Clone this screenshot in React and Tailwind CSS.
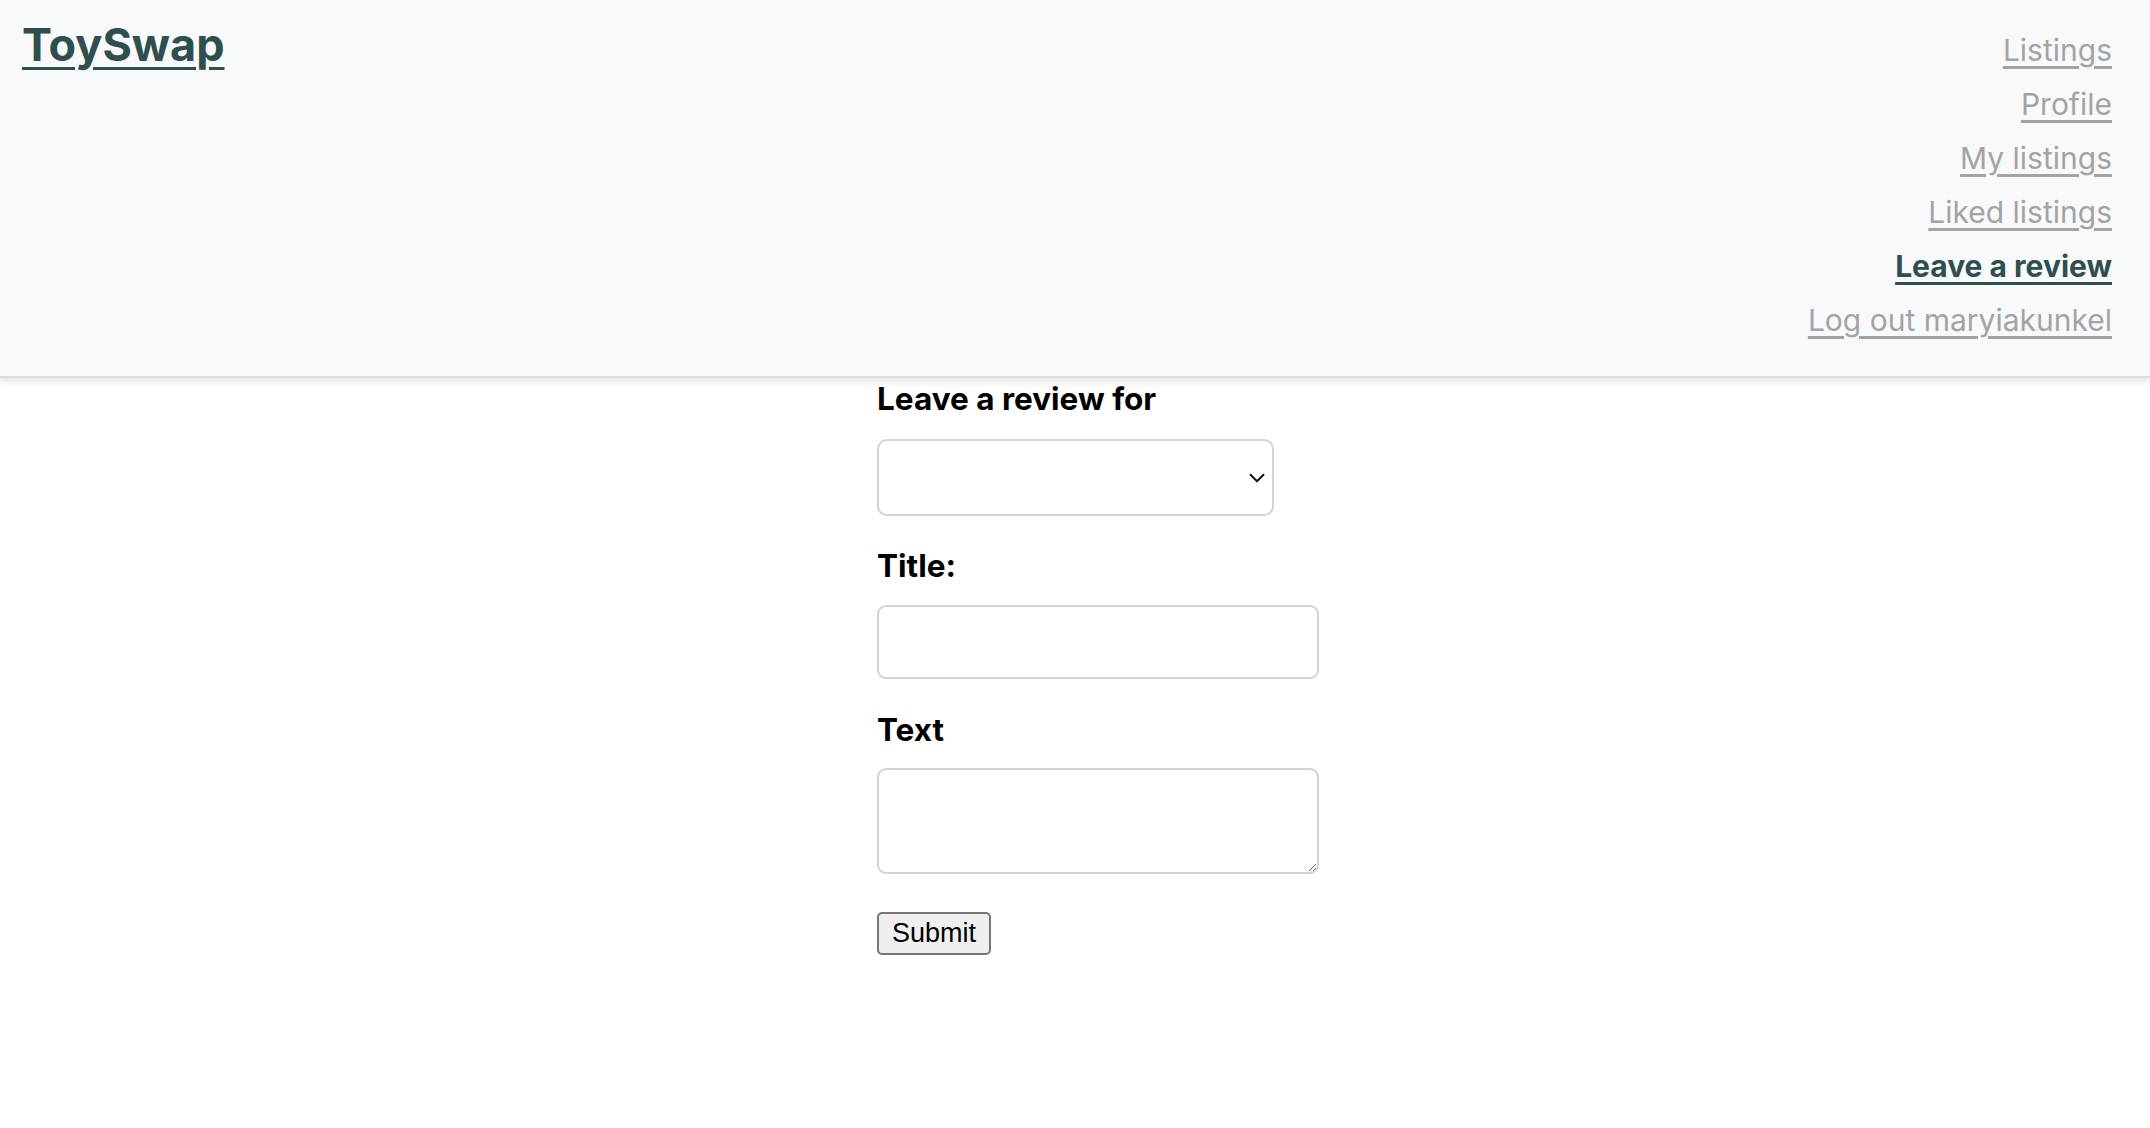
const navLinks = [
  { label: "Listings" },
  { label: "Profile" },
  { label: "My listings" },
  { label: "Liked listings" },
  { label: "Leave a review", active: true },
  { label: "Log out maryiakunkel" },
];

function Header() {
  return (
    <header className="flex items-baseline justify-between border-b-2 border-[#dcdcdc] bg-[#f8f9fa] pb-[29px] pl-[22px] pr-[38px] pt-[18px] shadow-[0_3px_8px_rgba(0,0,0,0.12)]">
      <a href="#" className="text-[45px] font-bold leading-[54px] text-[#2f4f4f] underline decoration-[3px] underline-offset-[6px]">
        ToySwap
      </a>
      <nav className="flex flex-col items-end">
        {navLinks.map((l) => (
          <a
            key={l.label}
            href="#"
            className={
              l.active
                ? "text-[30px] font-bold leading-[54px] text-[#2f4f4f] underline decoration-[3px] underline-offset-[5px]"
                : "text-[30px] leading-[54px] text-[#a3a3a3] underline decoration-[3px] underline-offset-[5px]"
            }
          >
            {l.label}
          </a>
        ))}
      </nav>
    </header>
  );
}

function ReviewForm() {
  return (
    <form className="mx-auto w-[396px] pt-[3px]" onSubmit={(e) => e.preventDefault()}>
      <label className="block text-[31.5px] font-bold leading-[36px] text-black">Leave a review for</label>
      <div className="relative mt-[22px] h-[77px] w-[397px] rounded-[10px] border-2 border-[#cfd3d9] bg-white">
        <svg className="absolute right-[7px] top-1/2 h-[10px] w-[16px] -translate-y-1/2" viewBox="0 0 16 10" fill="none">
          <path d="M1.5 1.8 8 8.2 14.5 1.8" stroke="#111" strokeWidth="2" strokeLinecap="round" strokeLinejoin="round" />
        </svg>
      </div>

      <label className="mt-[32px] block text-[31.5px] font-bold leading-[36px] text-black">Title:</label>
      <input type="text" className="mt-[21px] block h-[74px] w-[442px] rounded-[9px] border-2 border-[#cfd3d9] bg-white px-3 text-[26px] outline-none" />

      <label className="mt-[33px] block text-[31.5px] font-bold leading-[36px] text-black">Text</label>
      <textarea className="mt-[20px] block h-[106px] w-[442px] rounded-[9px] border-2 border-[#cfd3d9] bg-white px-3 text-[26px] outline-none" />

      <button
        type="submit"
        className="mt-[38px] block h-[43px] w-[114px] rounded-[5px] border-2 border-[#767676] bg-[#efefef] text-[27px] leading-none text-black"
        style={{ fontFamily: '"Liberation Sans", Arial, sans-serif' }}
      >
        Submit
      </button>
    </form>
  );
}

export default function App() {
  return (
    <div className="min-h-[1128px] bg-white" style={{ fontFamily: 'Inter, "Noto Sans", sans-serif' }}>
      <Header />
      <ReviewForm />
    </div>
  );
}
